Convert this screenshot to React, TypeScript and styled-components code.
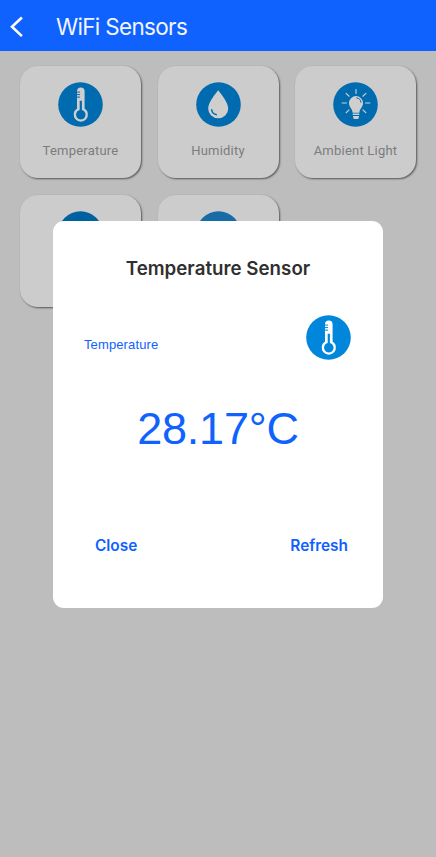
import React from "react";
import styled, { createGlobalStyle } from "styled-components";

const GlobalStyle = createGlobalStyle`
  * { box-sizing: border-box; }
  body { margin: 0; background: #bdbdbd; }
  button { border: 0; background: none; padding: 0; margin: 0; cursor: pointer; }
`;

const Screen = styled.div`
  position: relative;
  width: 436px;
  height: 857px;
  overflow: hidden;
  background: #bdbdbd;
`;

const Header = styled.header`
  display: flex;
  align-items: center;
  height: 51px;
  padding: 2px 0 0 9px;
  background: #0f62fe;
`;

const BackButton = styled.button`
  display: flex;
  width: 16px;
  height: 24px;
`;

const Title = styled.h1`
  margin: 0 0 0 31px;
  font: 400 22.5px/28px Inter, sans-serif;
  letter-spacing: -0.68px;
  color: #f1f5ff;
`;

const Grid = styled.main`
  display: grid;
  grid-template-columns: repeat(3, 121px);
  grid-auto-rows: 112px;
  gap: 17.3px 16.5px;
  padding: 15px 20px;
`;

const Card = styled.section`
  display: flex;
  flex-direction: column;
  align-items: center;
  padding-top: 16px;
  border-radius: 18px;
  background: #cccccc;
  box-shadow: 1px 1px 2px rgba(0, 0, 0, 0.55);
`;

const CardLabel = styled.span`
  margin-top: 15px;
  font: 400 13px/18px Roboto, sans-serif;
  letter-spacing: 0.22px;
  color: #7c7c7c;
  white-space: nowrap;
`;

const Overlay = styled.div`
  position: absolute;
  inset: 0;
  padding: 221px 53px 0;
`;

const Dialog = styled.div`
  display: flex;
  flex-direction: column;
  width: 330px;
  height: 387px;
  border-radius: 11px;
  background: #ffffff;
`;

const DialogTitle = styled.h2`
  margin: 36px 0 0;
  text-align: center;
  font: 600 18.7px/24px Inter, sans-serif;
  letter-spacing: 0.03px;
  color: #303030;
`;

const SensorRow = styled.div`
  display: flex;
  justify-content: space-between;
  margin-top: 34px;
  padding: 0 32px 0 31px;
`;

const SensorName = styled.span`
  margin-top: 21px;
  font: 400 13px/18px "Liberation Sans", sans-serif;
  letter-spacing: 0.12px;
  color: #0f62fe;
`;

const Reading = styled.div`
  margin-top: 43px;
  text-align: center;
  font: 400 45px/52px "Liberation Sans", sans-serif;
  letter-spacing: -0.25px;
  color: #0f62fe;
`;

const Actions = styled.div`
  display: flex;
  justify-content: space-between;
  margin-top: 81px;
  padding: 0 35px 0 42px;
`;

const Action = styled.button`
  font: 600 15.4px/20px Inter, sans-serif;
  color: #0f62fe;
`;

type Glyph = "thermometer" | "drop" | "bulb" | "blank";

const Icon = styled.svg`
  flex-shrink: 0;
  width: 45px;
  height: 45px;
`;

function SensorIcon({ glyph, disc, ink }: { glyph: Glyph; disc: string; ink: string }) {
  return (
    <Icon viewBox="0 0 45 45">
      <circle cx="22.5" cy="22.5" r="22.3" fill={disc} />
      {glyph === "thermometer" && (
        <>
          <path d="M19 9.2a3.8 3.8 0 0 1 7.6 0V26.6a7.1 7.1 0 1 1-7.6 0Z" fill={ink} />
          <path d="M18.6 10.1h3.5M18.6 12.6h3.5M18.6 15.1h3.5" stroke={disc} strokeWidth="1" />
          <path d="M21.7 18.8h2.2v9.3a4.8 4.8 0 1 1-2.2 0Z" fill={disc} />
        </>
      )}
      {glyph === "drop" && (
        <>
          <path
            d="M22.2 8.2C25.4 12.7 32.2 20 32.2 26.8a10 9.4 0 0 1-20 0C12.2 20 19 12.7 22.2 8.2Z"
            fill={ink}
          />
          <path d="M15.6 27.2c.3 3 2.2 5.2 5.3 5.5" fill="none" stroke={disc} strokeWidth="1.5" />
        </>
      )}
      {glyph === "bulb" && (
        <>
          <path
            d="M23 7v5M12.8 11.1l3.6 3.4M33.2 11.1l-3.6 3.4M8.7 21h5.2M32.1 21h5.2M12.8 31l3.6-3.4M33.2 31l-3.6-3.4"
            stroke={ink}
            strokeWidth="1.1"
          />
          <path
            d="M23 14.1a7 7 0 0 1 7 7.1c0 4-3.5 5.2-3.6 9.6h-6.8C19.5 26.4 16 25.2 16 21.2a7 7 0 0 1 7-7.1Z"
            fill={ink}
          />
          <path d="M23.4 15.9c2.5 0 4.6 2 4.6 4.8" fill="none" stroke={disc} strokeWidth="1" />
          <path d="M19.7 31.6h6.6v1.5h-6.6ZM19.9 34h6.2l-.8 2.9h-4.6Z" fill={ink} />
        </>
      )}
    </Icon>
  );
}

const sensors: { name: string; glyph: Glyph; disc: string }[] = [
  { name: "Temperature", glyph: "thermometer", disc: "#006bae" },
  { name: "Humidity", glyph: "drop", disc: "#006bae" },
  { name: "Ambient Light", glyph: "bulb", disc: "#006bae" },
  { name: "", glyph: "blank", disc: "#0061a0" },
  { name: "", glyph: "blank", disc: "#176ca5" },
];

export default function App() {
  return (
    <Screen>
      <GlobalStyle />
      <Header>
        <BackButton aria-label="Back">
          <svg width="16" height="24" viewBox="0 0 16 24">
            <path d="M12.9 2.5 3 11.8l9.9 9.3" fill="none" stroke="#fff" strokeWidth="2.6" />
          </svg>
        </BackButton>
        <Title>WiFi Sensors</Title>
      </Header>
      <Grid>
        {sensors.map((s, i) => (
          <Card key={i}>
            <SensorIcon glyph={s.glyph} disc={s.disc} ink="#cfcfcf" />
            {s.name && <CardLabel>{s.name}</CardLabel>}
          </Card>
        ))}
      </Grid>
      <Overlay>
        <Dialog role="dialog" aria-label="Temperature Sensor">
          <DialogTitle>Temperature Sensor</DialogTitle>
          <SensorRow>
            <SensorName>Temperature</SensorName>
            <SensorIcon glyph="thermometer" disc="#0086da" ink="#fff" />
          </SensorRow>
          <Reading>28.17°C</Reading>
          <Actions>
            <Action>Close</Action>
            <Action>Refresh</Action>
          </Actions>
        </Dialog>
      </Overlay>
    </Screen>
  );
}
